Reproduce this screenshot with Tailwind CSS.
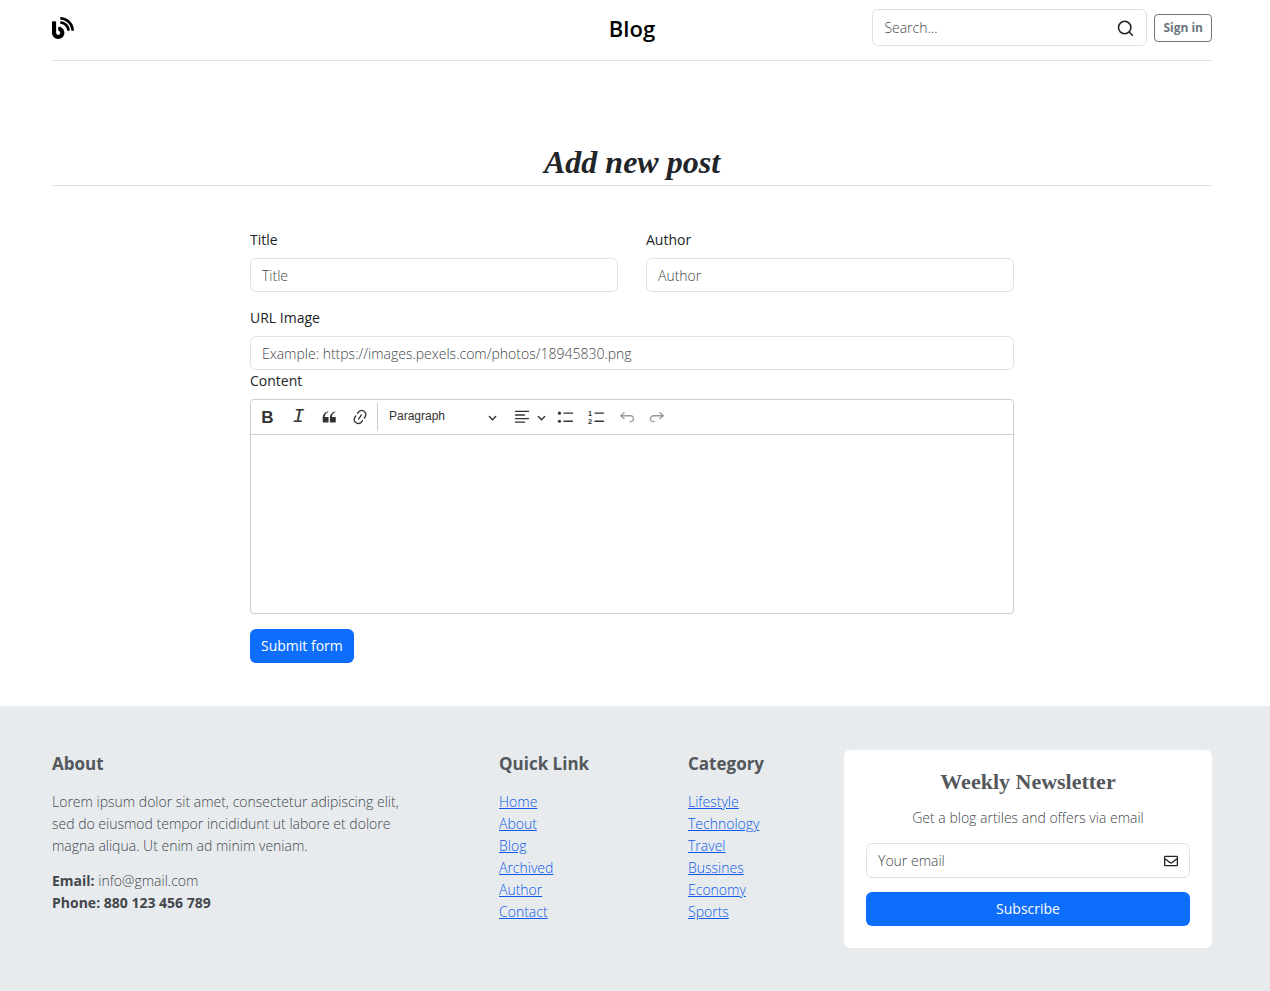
<!DOCTYPE html>
<html lang="en">
<head>
<meta charset="utf-8">
<meta name="viewport" content="width=device-width, initial-scale=1">
<title>Blog - Add new post</title>
<script src="https://cdn.jsdelivr.net/npm/@tailwindcss/browser@4"></script>
</head>
<body class="flex min-h-screen flex-col bg-white font-['Open_Sans','Noto_Sans',sans-serif] text-sm font-light text-[#212529]">
<div class="pr-[58px] pl-[52px]">
  <header class="grid grid-cols-3 items-center border-b border-[#dee2e6] pt-[9px] pb-[14px]">
    <a href="#" aria-label="Blog home" class="justify-self-start text-black">
      <svg class="size-[22px]" viewBox="0 0 512 512" fill="currentColor" aria-hidden="true"><path d="M172.2 226.8c-14.6-2.9-28.2 8.9-28.2 23.8V301c0 10.2 7.1 18.4 16.7 22 18.2 6.8 31.3 24.4 31.3 45 0 26.5-21.5 48-48 48s-48-21.5-48-48V120c0-13.3-10.7-24-24-24H24c-13.3 0-24 10.7-24 24v248c0 89.5 82.1 160.2 175 140.7 54.4-11.4 98.3-55.4 109.7-109.7 17.4-82.9-37-157.2-112.5-172.2zM209 0c-9.2-.5-17 6.8-17 16v31.6c0 8.5 6.6 15.5 15 15.9 129.4 7 233.4 112 240.9 241.5.5 8.4 7.5 15 15.9 15h32.1c9.2 0 16.5-7.8 16-17C503.4 139.8 372.2 8.6 209 0zm.3 96c-9.3-.7-17.3 6.7-17.3 16.1v32.1c0 8.4 6.5 15.3 14.8 15.9 76.8 6.3 138 68.2 144.9 145.2.8 8.3 7.6 14.7 15.9 14.7h32.2c9.3 0 16.8-8 16.1-17.3-8.4-110.1-96.5-198.2-206.6-206.7z"/></svg>
    </a>
    <a href="#" class="justify-self-center text-[22px] leading-7 font-semibold text-black">Blog</a>
    <div class="flex items-center gap-[7px] justify-self-end">
      <form class="flex h-[37px] w-[275px] items-center rounded-md border border-[#dee2e6] pr-3 pl-[11px]">
        <input type="search" aria-label="Search" placeholder="Search..." class="w-full min-w-0 flex-1 outline-none placeholder:text-[#43474b]">
        <button type="submit" aria-label="Search">
          <svg class="size-[17px]" viewBox="0 0 17 17" fill="none" stroke="currentColor" stroke-width="1.6" stroke-linecap="round" aria-hidden="true"><circle cx="7.7" cy="8.5" r="6.2"/><path d="m12.2 13 3.2 3.2"/></svg>
        </button>
      </form>
      <button type="button" class="h-7 rounded border border-[#6c757d] px-2 text-[12px] font-bold text-[#6c757d]">Sign in</button>
    </div>
  </header>

  <main>
    <h1 class="border-b border-[#dee2e6] pt-[84px] pb-[6px] text-center font-['Georgia','Liberation_Serif',serif] text-[32px] leading-[34px] font-bold italic">Add new post</h1>
    <form class="mx-[198px] pt-[43px] pb-[43px]">
      <div class="grid grid-cols-2 gap-x-7">
        <div>
          <label for="title" class="block leading-[22px] font-normal">Title</label>
          <input id="title" type="text" placeholder="Title" class="mt-[7px] h-[34px] w-full rounded-md border border-[#dee2e6] px-[11px] outline-none placeholder:text-[#43474b]">
        </div>
        <div>
          <label for="author" class="block leading-[22px] font-normal">Author</label>
          <input id="author" type="text" placeholder="Author" class="mt-[7px] h-[34px] w-full rounded-md border border-[#dee2e6] px-[11px] outline-none placeholder:text-[#43474b]">
        </div>
      </div>
      <label for="image" class="mt-[15px] block leading-[22px] font-normal">URL Image</label>
      <input id="image" type="url" placeholder="Example: https://images.pexels.com/photos/18945830.png" class="mt-[7px] block h-[34px] w-full rounded-md border border-[#dee2e6] px-[11px] outline-none placeholder:text-[#43474b]">
      <label for="content" class="block leading-[22px] font-normal">Content</label>
      <div class="mt-[7px] rounded-sm border border-[#ccced1] text-[#333]">
        <div class="flex h-[35px] items-center border-b border-[#ccced1] pl-px">
          <button type="button" aria-label="Bold" class="grid h-8 w-[31px] place-items-center font-['Liberation_Sans',sans-serif] text-[17px] leading-none font-bold">B</button>
          <button type="button" aria-label="Italic" class="grid h-8 w-[31px] place-items-center font-['Liberation_Mono',monospace] text-[20px] leading-none font-normal italic">I</button>
          <button type="button" aria-label="Block quote" class="grid h-8 w-[30px] place-items-center"><svg class="size-[18px]" viewBox="0 0 20 20" fill="currentColor"><path d="M3 10.423a6.5 6.5 0 0 1 6.056-6.408l.038.67C6.448 5.423 5.354 7.663 5.22 10H9c.552 0 .5.432.5.986v4.511c0 .554-.448.503-1 .503h-5c-.552 0-.5-.449-.5-1.003v-4.574zm8 0a6.5 6.5 0 0 1 6.056-6.408l.038.67c-2.646.739-3.74 2.979-3.873 5.315H17c.552 0 .5.432.5.986v4.511c0 .554-.448.503-1 .503h-5c-.552 0-.5-.449-.5-1.003v-4.574z"/></svg></button>
          <button type="button" aria-label="Link" class="grid h-8 w-8 place-items-center"><svg class="size-[18px]" viewBox="0 0 20 20" fill="currentColor"><path d="m11.077 15 .991-1.416a.75.75 0 1 1 1.229.86l-1.148 1.64a.748.748 0 0 1-.217.206 5.251 5.251 0 0 1-8.503-5.955.741.741 0 0 1 .12-.274l1.147-1.639a.75.75 0 1 1 1.228.86L4.933 10.7l.006.003a3.75 3.75 0 0 0 6.132 4.294l.006.004zm5.494-5.335a.748.748 0 0 1-.12.274l-1.147 1.639a.75.75 0 1 1-1.228-.86l.86-1.23a3.75 3.75 0 0 0-6.144-4.301l-.86 1.229a.75.75 0 0 1-1.229-.86l1.148-1.64a.748.748 0 0 1 .217-.206 5.251 5.251 0 0 1 8.503 5.955zm-4.563-2.532a.75.75 0 0 1 .184 1.045l-3.155 4.505a.75.75 0 1 1-1.229-.86l3.155-4.506a.75.75 0 0 1 1.045-.184z"/></svg></button>
          <span class="ml-px h-7 w-px bg-[#ccced1]"></span>
          <div class="grid w-[127px] items-center">
            <select aria-label="Heading" class="col-start-1 row-start-1 h-8 appearance-none pl-[11px] font-['Liberation_Sans',sans-serif] text-[12px] font-normal outline-none"><option>Paragraph</option><option>Heading 1</option><option>Heading 2</option></select>
            <svg class="pointer-events-none col-start-1 row-start-1 mr-2 size-[9px] justify-self-end" viewBox="0 0 10 10" fill="currentColor"><path d="M.941 4.523a.75.75 0 1 1 1.06-1.06l3.006 3.005 3.005-3.005a.75.75 0 1 1 1.06 1.06l-3.549 3.55a.75.75 0 0 1-1.168-.136L.941 4.523z"/></svg>
          </div>
          <button type="button" aria-label="Text alignment" class="flex h-8 w-[41px] items-center justify-end gap-[6px]">
            <svg class="size-[18px]" viewBox="0 0 20 20" fill="currentColor"><path d="M2 3.75c0 .414.336.75.75.75h14.5a.75.75 0 1 0 0-1.5H2.75a.75.75 0 0 0-.75.75zm0 8c0 .414.336.75.75.75h14.5a.75.75 0 1 0 0-1.5H2.75a.75.75 0 0 0-.75.75zm0 4c0 .414.336.75.75.75h9.929a.75.75 0 1 0 0-1.5H2.75a.75.75 0 0 0-.75.75zm0-8c0 .414.336.75.75.75h9.929a.75.75 0 1 0 0-1.5H2.75a.75.75 0 0 0-.75.75z"/></svg>
            <svg class="size-[9px]" viewBox="0 0 10 10" fill="currentColor"><path d="M.941 4.523a.75.75 0 1 1 1.06-1.06l3.006 3.005 3.005-3.005a.75.75 0 1 1 1.06 1.06l-3.549 3.55a.75.75 0 0 1-1.168-.136L.941 4.523z"/></svg>
          </button>
          <button type="button" aria-label="Bulleted list" class="ml-1 grid h-8 w-[31px] place-items-center"><svg class="size-[18px]" viewBox="0 0 20 20" fill="currentColor"><path d="M7 5.75c0 .414.336.75.75.75h9.5a.75.75 0 1 0 0-1.5h-9.5a.75.75 0 0 0-.75.75z M7 14.75c0 .414.336.75.75.75h9.5a.75.75 0 1 0 0-1.5h-9.5a.75.75 0 0 0-.75.75z"/><circle cx="2.75" cy="5.75" r="1.75"/><circle cx="2.75" cy="14.75" r="1.75"/></svg></button>
          <button type="button" aria-label="Numbered list" class="grid h-8 w-[31px] place-items-center"><svg class="size-[18px]" viewBox="0 0 20 20" fill="currentColor"><path d="M7 5.75c0 .414.336.75.75.75h9.5a.75.75 0 1 0 0-1.5h-9.5a.75.75 0 0 0-.75.75z M7 14.75c0 .414.336.75.75.75h9.5a.75.75 0 1 0 0-1.5h-9.5a.75.75 0 0 0-.75.75z"/><text x="0" y="8.5" font-size="8" class="font-['Liberation_Sans',sans-serif] font-bold">1</text><text x="0" y="18" font-size="8" class="font-['Liberation_Sans',sans-serif] font-bold">2</text></svg></button>
          <button type="button" aria-label="Undo" disabled class="grid h-8 w-[30px] place-items-center text-[#999]"><svg class="size-[18px]" viewBox="0 0 20 20" fill="currentColor"><path d="m5.042 9.367 2.189 1.837a.75.75 0 0 1-.965 1.149l-3.788-3.18a.747.747 0 0 1-.21-.284.75.75 0 0 1 .17-.945L6.23 4.762a.75.75 0 1 1 .964 1.15L4.863 7.866h8.917A.75.75 0 0 1 14 7.9a4 4 0 1 1-1.477 7.718l.344-1.489a2.5 2.5 0 1 0 1.094-4.73l.008-.032H5.042z"/></svg></button>
          <button type="button" aria-label="Redo" disabled class="grid h-8 w-[30px] place-items-center text-[#999]"><svg class="size-[18px]" viewBox="0 0 20 20" fill="currentColor"><path transform="matrix(-1 0 0 1 20 0)" d="m5.042 9.367 2.189 1.837a.75.75 0 0 1-.965 1.149l-3.788-3.18a.747.747 0 0 1-.21-.284.75.75 0 0 1 .17-.945L6.23 4.762a.75.75 0 1 1 .964 1.15L4.863 7.866h8.917A.75.75 0 0 1 14 7.9a4 4 0 1 1-1.477 7.718l.344-1.489a2.5 2.5 0 1 0 1.094-4.73l.008-.032H5.042z"/></svg></button>
        </div>
        <textarea id="content" class="block h-[178px] w-full resize-none p-2 outline-none"></textarea>
      </div>
      <button type="submit" class="mt-[15px] block h-[34px] rounded-md bg-[#0d6efd] px-[11px] font-normal text-white">Submit form</button>
    </form>
  </main>
</div>

<footer class="flex flex-1 items-start bg-[#e7ebee] pt-11 pr-[58px] pb-[43px] pl-[52px] text-[#43474b]">
  <section class="flex-1 pr-[76px]">
    <h2 class="text-[17px] leading-7 font-bold text-[#54585c]">About</h2>
    <p class="mt-[13px] leading-[22px]">Lorem ipsum dolor sit amet, consectetur adipiscing elit, sed do eiusmod tempor incididunt ut labore et dolore magna aliqua. Ut enim ad minim veniam.</p>
    <p class="mt-[13px] leading-[22px]"><b class="font-bold">Email:</b> info@gmail.com</p>
    <p class="leading-[22px] font-bold">Phone: 880 123 456 789</p>
  </section>
  <nav aria-label="Quick Link" class="w-[189px]">
    <h2 class="text-[17px] leading-7 font-bold text-[#54585c]">Quick Link</h2>
    <ul class="mt-[13px] leading-[22px] text-[#0d5ae8] underline">
      <li><a href="#">Home</a></li><li><a href="#">About</a></li><li><a href="#">Blog</a></li><li><a href="#">Archived</a></li><li><a href="#">Author</a></li><li><a href="#">Contact</a></li>
    </ul>
  </nav>
  <nav aria-label="Category" class="w-[156px]">
    <h2 class="text-[17px] leading-7 font-bold text-[#54585c]">Category</h2>
    <ul class="mt-[13px] leading-[22px] text-[#0d5ae8] underline">
      <li><a href="#">Lifestyle</a></li><li><a href="#">Technology</a></li><li><a href="#">Travel</a></li><li><a href="#">Bussines</a></li><li><a href="#">Economy</a></li><li><a href="#">Sports</a></li>
    </ul>
  </nav>
  <form class="w-[368px] rounded-md bg-white px-[22px] pt-[18px] pb-[22px] text-center">
    <h2 class="font-['Georgia','Liberation_Serif',serif] text-[22px] leading-7 font-bold text-[#54585c]">Weekly Newsletter</h2>
    <p class="mt-[11px] leading-[22px]">Get a blog artiles and offers via email</p>
    <div class="mt-[14px] flex h-[35px] items-center rounded-md border border-[#dee2e6] px-[11px]">
      <input type="email" aria-label="Your email" placeholder="Your email" class="w-full min-w-0 flex-1 outline-none placeholder:text-[#43474b]">
      <svg class="size-[14px] text-[#212529]" viewBox="0 0 512 512" fill="currentColor" aria-hidden="true"><path d="M464 64H48C21.49 64 0 85.49 0 112v288c0 26.51 21.49 48 48 48h416c26.51 0 48-21.49 48-48V112c0-26.51-21.49-48-48-48zm0 48v40.805c-22.422 18.259-58.168 46.651-134.587 106.49-16.841 13.247-50.201 45.072-73.413 44.701-23.208.375-56.579-31.459-73.413-44.701C106.18 199.465 70.425 171.067 48 152.805V112h416zM48 400V214.398c22.914 18.251 55.409 43.862 104.938 82.646 21.857 17.205 60.134 55.186 103.062 54.955 42.717.231 80.509-37.199 103.053-54.947 49.528-38.783 82.032-64.401 104.947-82.653V400H48z"/></svg>
    </div>
    <button type="submit" class="mt-[14px] h-[34px] w-full rounded-md bg-[#0d6efd] font-normal text-white">Subscribe</button>
  </form>
</footer>
</body>
</html>
